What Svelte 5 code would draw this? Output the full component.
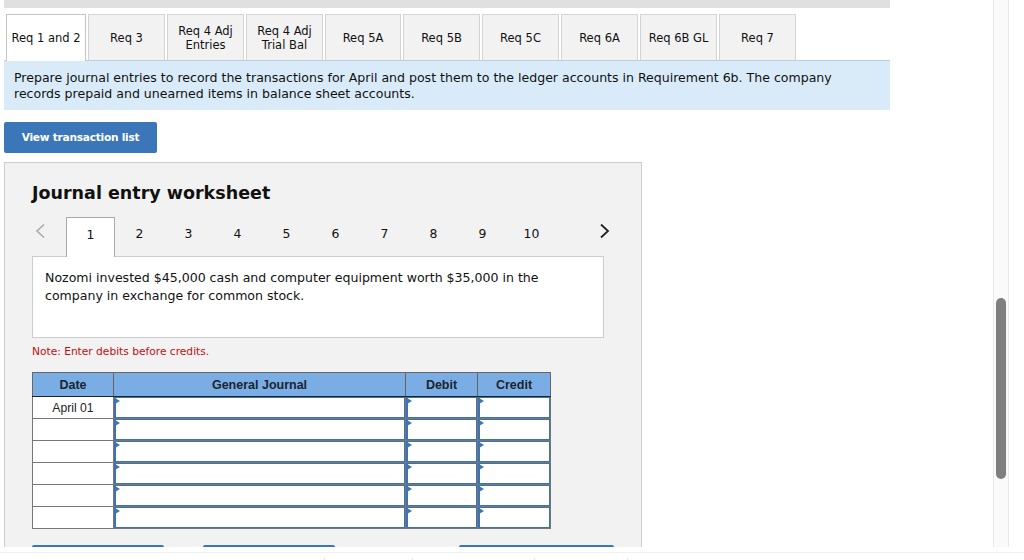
<script>
  const tabs = [
    { label: "Req 1 and 2", w: 80, active: true },
    { label: "Req 3", w: 77 },
    { label: "Req 4 Adj Entries", w: 77 },
    { label: "Req 4 Adj Trial Bal", w: 77 },
    { label: "Req 5A", w: 76 },
    { label: "Req 5B", w: 77 },
    { label: "Req 5C", w: 77 },
    { label: "Req 6A", w: 77 },
    { label: "Req 6B GL", w: 77 },
    { label: "Req 7", w: 77 },
  ];
  const pages = [1, 2, 3, 4, 5, 6, 7, 8, 9, 10];
  const rows = ["April 01", "", "", "", "", ""];
  // gaps between the faint ruler ticks along the bottom edge
  const tickGaps = [324, 87, 121, 92];
</script>

<div class="page">
  <main class="content">
    <div class="topbar"></div>
    <nav class="tabs">
      {#each tabs as tab}
        <button class="tab" class:active={tab.active} style="width: {tab.w}px">{tab.label}</button>
      {/each}
    </nav>
    <div class="instructions">
      Prepare journal entries to record the transactions for April and post them to the ledger accounts in Requirement 6b. The company records prepaid and unearned items in balance sheet accounts.
    </div>
    <button class="view-btn">View transaction list</button>

    <section class="worksheet">
      <h2>Journal entry worksheet</h2>
      <div class="pager">
        <svg class="arrow" width="12" height="16" viewBox="0 0 12 16"><path d="M10 1.5 3 8l7 6.5" fill="none" stroke="#aaa" stroke-width="1.6" /></svg>
        <div class="pages">
          {#each pages as p, i}
            <div class="page-num" class:current={i === 0}>{p}</div>
          {/each}
        </div>
        <svg class="arrow next" width="12" height="16" viewBox="0 0 12 16"><path d="M2 1.5 9 8l-7 6.5" fill="none" stroke="#222" stroke-width="1.8" /></svg>
      </div>
      <div class="prompt">Nozomi invested $45,000 cash and computer equipment worth $35,000 in the company in exchange for common stock.</div>
      <p class="note">Note: Enter debits before credits.</p>
      <table>
        <thead>
          <tr>
            <th class="c-date">Date</th>
            <th class="c-journal">General Journal</th>
            <th class="c-debit">Debit</th>
            <th class="c-credit">Credit</th>
          </tr>
        </thead>
        <tbody>
          {#each rows as date}
            <tr>
              <td class="date">{date}</td>
              <td class="entry"><div class="field"></div></td>
              <td class="entry"><div class="field"></div></td>
              <td class="entry"><div class="field"></div></td>
            </tr>
          {/each}
        </tbody>
      </table>
      <div class="actions">
        <button class="action a1"></button>
        <button class="action a2"></button>
        <button class="action a3"></button>
      </div>
    </section>
  </main>
  <div class="track"><div class="thumb"></div></div>
  <div class="footer-line"></div>
  <div class="ticks">
    {#each tickGaps as gap}
      <span class="tick" style="margin-left: {gap}px"></span>
    {/each}
  </div>
</div>

<style>
  :global(body) {
    margin: 0;
    background: #fff;
  }

  .page {
    display: flex;
    flex-wrap: wrap;
    align-content: flex-start;
    width: 1024px;
    height: 560px;
    overflow: hidden;
    font-family: "DejaVu Sans", Verdana, sans-serif;
    color: #111;
  }

  .content {
    width: 886px;
    margin-left: 4px;
    margin-right: 103px;
    flex-shrink: 0;
    height: 547px;
    overflow: hidden;
  }

  .topbar {
    height: 8px;
    background: #e0e0e0;
  }

  .tabs {
    display: flex;
    gap: 2px;
    margin: 6px 0 0 2px;
    height: 46px;
  }

  .tab {
    box-sizing: border-box;
    height: 46px;
    padding: 0 6px;
    border: 1px solid #d4d4d4;
    border-bottom: none;
    background: #f2f2f2;
    color: #111;
    font: 11.5px/14px "DejaVu Sans", Verdana, sans-serif;
  }

  .tab.active {
    position: relative;
    z-index: 1;
    height: 47px;
    background: #fff;
    border: 1px solid #c4c4c4;
    border-bottom: none;
    padding: 0 2px;
  }

  .instructions {
    box-sizing: border-box;
    height: 50px;
    padding: 9px 40px 0 10px;
    border-top: 1px solid #b9cfe0;
    background: #d9ebf9;
    font-size: 12.55px;
    line-height: 15.5px;
  }

  .view-btn {
    display: block;
    width: 153px;
    height: 31px;
    margin-top: 12px;
    padding: 0 0 1px;
    border: none;
    border-radius: 2px;
    background: #3b76b9;
    color: #fff;
    font: bold 10.6px "DejaVu Sans", Verdana, sans-serif;
    letter-spacing: -0.25px;
  }

  .worksheet {
    box-sizing: border-box;
    width: 638px;
    height: 385px;
    margin-top: 9px;
    padding: 0 0 0 27px;
    border: 1px solid #ccc;
    border-bottom: none;
    background: #f2f2f2;
    overflow: hidden;
  }

  h2 {
    margin: 19px 0 0;
    font-size: 17.5px;
    line-height: 22px;
    font-weight: bold;
    color: #111;
  }

  .pager {
    display: flex;
    align-items: flex-start;
    height: 39px;
    margin-top: 13px;
    position: relative;
    z-index: 1;
  }

  .arrow {
    margin: 6px 0 0 2px;
    flex-shrink: 0;
  }

  .arrow.next {
    margin: 6px 0 0 43px;
  }

  .pages {
    display: flex;
    margin-left: 20px;
  }

  .page-num {
    box-sizing: border-box;
    width: 49px;
    height: 39px;
    padding-top: 9px;
    text-align: center;
    font-size: 12.4px;
    line-height: 15px;
  }

  .page-num.current {
    height: 40px;
    background: #fff;
    border: 1px solid #aaa;
    border-bottom: none;
  }

  .prompt {
    box-sizing: border-box;
    width: 572px;
    height: 82px;
    padding: 12px 50px 0 12px;
    background: #fff;
    border: 1px solid #ccc;
    font-size: 12.55px;
    line-height: 18px;
  }

  .note {
    margin: 7px 0 0;
    color: #c00f0f;
    font-size: 10.65px;
    line-height: 13px;
  }

  table {
    margin-top: 14px;
    width: 518px;
    border-collapse: collapse;
    table-layout: fixed;
    font-family: "Liberation Sans", Arial, sans-serif;
    font-size: 12px;
  }

  th {
    box-sizing: border-box;
    height: 24px;
    padding: 0;
    background: #7aade4;
    border: 1px solid #666;
    border-bottom-color: #222;
    color: #1c2430;
    font-size: 12.5px;
    font-weight: bold;
  }

  .c-date {
    width: 81px;
  }

  .c-journal {
    width: 292px;
    border-left-color: #222;
  }

  .c-debit {
    width: 72px;
  }

  .c-credit {
    width: 73px;
  }

  td {
    box-sizing: border-box;
    height: 22px;
    padding: 0;
    background: #fff;
    border: 1px solid #777;
  }

  .date {
    text-align: center;
    color: #222;
    font-size: 12.2px;
  }

  .entry {
    position: relative;
  }

  .field {
    box-sizing: border-box;
    height: 21px;
    border: 1px solid #3f73ad;
    border-left-width: 2px;
    background: #fff;
  }

  .field::before {
    content: "";
    position: absolute;
    top: 1px;
    left: 1px;
    border-left: 5px solid #3b76b9;
    border-top: 3.5px solid transparent;
    border-bottom: 3.5px solid transparent;
  }

  .actions {
    display: flex;
    margin-top: 16px;
  }

  .action {
    height: 20px;
    padding: 0;
    border: none;
    border-radius: 2px 2px 0 0;
    background: #3b76b9;
  }

  .a1 {
    width: 132px;
  }

  .a2 {
    width: 132px;
    margin-left: 39px;
  }

  .a3 {
    width: 155px;
    margin-left: 124px;
  }

  .track {
    box-sizing: border-box;
    width: 16px;
    height: 547px;
    flex-shrink: 0;
    background: #fafafa;
    border-left: 1px solid #e8e8e8;
    border-right: 1px solid #e8e8e8;
    padding: 298px 2px 0 2px;
  }

  .thumb {
    height: 181px;
    border-radius: 6px;
    background: #7f7f7f;
  }

  .footer-line {
    width: 100%;
    height: 1px;
    margin-top: 5px;
    background: #f0f0f0;
  }

  .ticks {
    display: flex;
    width: 100%;
    margin-top: 5px;
  }

  .tick {
    width: 1px;
    height: 3px;
    background: #e6e6e6;
  }
</style>
